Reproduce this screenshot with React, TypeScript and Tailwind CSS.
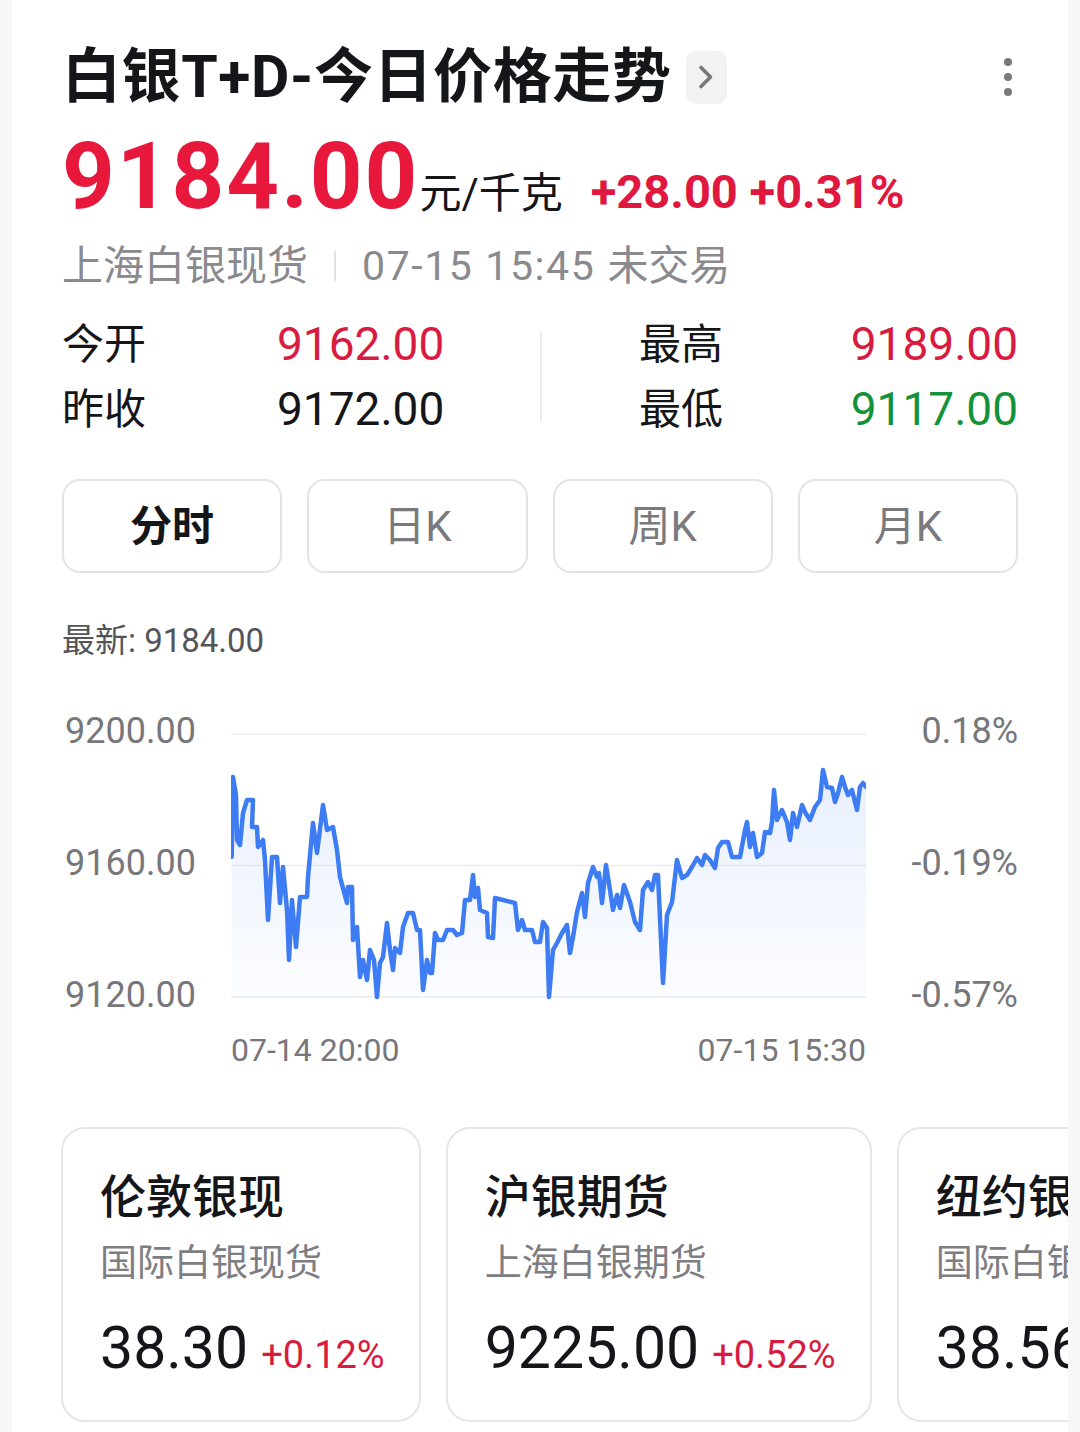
import React from "react";

const PTS: [number, number][] = [
  [231.7, 856.7], [233, 777], [236, 795], [237, 840], [240, 845], [243, 813], [247, 800], [253, 800],
  [252, 827], [257, 827], [258, 847], [263, 840], [265, 860], [268, 920], [272, 857], [277, 857],
  [280, 903], [283, 867], [287, 910], [289, 960], [292, 900], [296, 947], [300, 897], [307, 897],
  [308, 877], [313, 823], [317, 853], [323, 805], [327, 830], [333, 827], [337, 850], [340, 877],
  [347, 903], [348, 887], [352, 887], [353, 940], [357, 927], [360, 977], [363, 960], [367, 980],
  [370, 950], [374, 960], [377, 997], [380, 963], [383, 957], [387, 923], [390, 950], [393, 970],
  [395, 948], [400, 953], [403, 927], [408, 913], [413, 913], [417, 930], [420, 930], [423, 990],
  [427, 960], [430, 973], [432, 973], [435, 933], [438, 940], [443, 940], [447, 930], [453, 930],
  [457, 935], [462, 933], [465, 900], [470, 900], [473, 875], [475, 897], [478, 888], [480, 910],
  [487, 913], [488, 937], [493, 938], [495, 898], [515, 903], [518, 930], [522, 920], [525, 930],
  [532, 930], [535, 942], [540, 942], [543, 922], [547, 928], [549, 997], [553, 950], [557, 943],
  [562, 933], [567, 925], [570, 953], [573, 937], [577, 912], [582, 893], [585, 917], [588, 883],
  [593, 867], [597, 877], [599, 873], [602, 903], [606, 865], [610, 890], [613, 910], [617, 895],
  [620, 908], [624, 885], [630, 902], [635, 922], [640, 930], [643, 890], [648, 882], [652, 890],
  [655, 875], [658, 875], [663, 983], [667, 915], [672, 902], [677, 860], [682, 878], [687, 875],
  [692, 867], [697, 858], [702, 865], [705, 855], [710, 860], [715, 868], [718, 848], [722, 842],
  [728, 842], [732, 857], [740, 857], [745, 830], [747, 822], [750, 847], [753, 833], [757, 857],
  [762, 853], [765, 832], [770, 833], [772, 822], [774, 790], [777, 820], [782, 810], [787, 822],
  [790, 840], [793, 813], [797, 827], [802, 805], [805, 812], [810, 820], [815, 807], [820, 800],
  [823, 770], [827, 787], [832, 788], [835, 802], [838, 793], [842, 777], [845, 787], [848, 795],
  [852, 790], [857, 810], [860, 787], [863, 783], [866, 787],
];

function PriceChart() {
  const pts = PTS.map(([x, y]) => [x - 231, y - 711] as [number, number]);
  const line = pts.map(([x, y], i) => `${i ? "L" : "M"}${x.toFixed(1)} ${y.toFixed(1)}`).join(" ");
  const area = `${line} L${pts[pts.length - 1][0]} 286 L${pts[0][0]} 286 Z`;
  return (
    <svg width="635" height="304" viewBox="0 0 635 304" className="block shrink-0">
      <defs>
        <linearGradient id="fill" x1="0" y1="0" x2="0" y2="1">
          <stop offset="0" stopColor="#3d7cf2" stopOpacity="0.12" />
          <stop offset="1" stopColor="#3d7cf2" stopOpacity="0.02" />
        </linearGradient>
      </defs>
      {[23, 154.5, 286].map((y) => (
        <line key={y} x1="0" x2="635" y1={y} y2={y} stroke="#ececec" strokeWidth="1.5" />
      ))}
      <path d={area} fill="url(#fill)" />
      <path d={line} fill="none" stroke="#3d7cf2" strokeWidth="4.5" strokeLinejoin="round" strokeLinecap="round" />
    </svg>
  );
}

const tabs = ["分时", "日K", "周K", "月K"];

const cards = [
  { title: "伦敦银现", sub: "国际白银现货", value: "38.30", pct: "+0.12%" },
  { title: "沪银期货", sub: "上海白银期货", value: "9225.00", pct: "+0.52%" },
  { title: "纽约银期", sub: "国际白银期货", value: "38.56", pct: "+0.21%" },
];

export default function App() {
  return (
    <div className="min-h-screen bg-[#f7f7f7] font-['Roboto','Noto_Sans_CJK_SC',sans-serif] text-[#15161a]">
      <div className="mx-[12px] min-h-[1432px] overflow-hidden bg-white px-[50px]">
        {/* title */}
        <div className="mt-[39px] flex h-[76px] items-center">
          <h1 className="text-[59px] leading-[76px] font-bold tracking-[0.6px]">白银T+D-今日价格走势</h1>
          <div className="ml-[14px] flex h-[53px] w-[41px] items-center justify-center rounded-[10px] bg-[#f2f2f2]">
            <svg width="18" height="26" viewBox="0 0 18 26">
              <path d="M4 3.5 L13.5 13 L4 22.5" fill="none" stroke="#77777b" strokeWidth="3.6" strokeLinecap="round" strokeLinejoin="round" />
            </svg>
          </div>
          <div className="ml-auto mr-[6px] flex flex-col gap-[7px]">
            <span className="h-[8px] w-[8px] rounded-full bg-[#7a7a7e]" />
            <span className="h-[8px] w-[8px] rounded-full bg-[#7a7a7e]" />
            <span className="h-[8px] w-[8px] rounded-full bg-[#7a7a7e]" />
          </div>
        </div>

        {/* price */}
        <div className="mt-[16px] flex h-[92px] items-baseline">
          <span className="text-[92px] leading-none font-bold tracking-[2px] text-[#e8173c]">9184.00</span>
          <span className="text-[42px] leading-none text-[#15161a]">元/千克</span>
          <span className="ml-[28px] text-[47px] leading-none font-bold text-[#e0173e]">+28.00 +0.31%</span>
        </div>

        {/* sub line */}
        <div className="mt-[15px] flex h-[56px] items-center text-[41px] leading-[56px] text-[#8a8a8e]">
          <span>上海白银现货</span>
          <span className="mx-[26px] h-[30px] w-[2px] bg-[#e2e2e2]" />
          <span className="tracking-[1.6px]">07-15 15:45</span>
          <span className="ml-[12px]">未交易</span>
        </div>

        {/* stats */}
        <div className="mt-[18px] flex items-center">
          <div className="w-[478px]">
            <div className="flex h-[65px] items-center">
              <span className="w-[215px] text-[42px]">今开</span>
              <span className="text-[46px] text-[#d81b3f]">9162.00</span>
            </div>
            <div className="flex h-[65px] items-center">
              <span className="w-[215px] text-[42px]">昨收</span>
              <span className="text-[46px] text-[#15161a]">9172.00</span>
            </div>
          </div>
          <div className="h-[90px] w-[2px] bg-[#ebebeb]" />
          <div className="flex-1 pl-[97px]">
            <div className="flex h-[65px] items-center justify-between">
              <span className="text-[42px]">最高</span>
              <span className="text-[46px] text-[#d81b3f]">9189.00</span>
            </div>
            <div className="flex h-[65px] items-center justify-between">
              <span className="text-[42px]">最低</span>
              <span className="text-[46px] text-[#14923a]">9117.00</span>
            </div>
          </div>
        </div>

        {/* tabs */}
        <div className="mt-[37px] grid grid-cols-4 gap-[25px]">
          {tabs.map((t, i) => (
            <div
              key={t}
              className={
                i === 0
                  ? "flex h-[94px] items-center justify-center rounded-[18px] border-2 border-[#e4e4e4] text-[42px] font-bold text-[#15161a]"
                  : "flex h-[94px] items-center justify-center rounded-[18px] border-2 border-[#e4e4e4] text-[42px] text-[#7a7a7e]"
              }
            >
              {t}
            </div>
          ))}
        </div>

        {/* latest */}
        <div className="mt-[46px] text-[33px] leading-[44px] text-[#555559]">最新: 9184.00</div>

        {/* chart */}
        <div className="mt-[48px] flex h-[304px]">
          <div className="flex w-[169px] flex-col justify-between pl-[3px] text-[36px] leading-[40px] text-[#77777b]">
            <span>9200.00</span>
            <span>9160.00</span>
            <span>9120.00</span>
          </div>
          <PriceChart />
          <div className="flex flex-1 flex-col items-end justify-between text-[36px] leading-[40px] text-[#77777b]">
            <span>0.18%</span>
            <span>-0.19%</span>
            <span>-0.57%</span>
          </div>
        </div>
        <div className="mt-[15px] flex h-[40px] w-[804px] justify-between pl-[169px] text-[32px] leading-[40px] text-[#77777b]">
          <span>07-14 20:00</span>
          <span>07-15 15:30</span>
        </div>

        {/* related */}
        <div className="-mr-[50px] mt-[57px] ml-[-1px] flex gap-[25px] pb-[10px]">
          {cards.map((c) => (
            <div key={c.title} className="h-[295px] shrink-0 rounded-[24px] border-2 border-[#e6e6e6] pl-[37px] pr-[34px] pt-[38px]">
              <div className="text-[46px] leading-[60px] font-medium">{c.title}</div>
              <div className="mt-[12px] text-[37px] leading-[50px] text-[#7d7d82]">{c.sub}</div>
              <div className="mt-[29px] flex items-baseline whitespace-nowrap">
                <span className="text-[59px] leading-none">{c.value}</span>
                <span className="ml-[13px] text-[38px] leading-none text-[#d81b3f]">{c.pct}</span>
              </div>
            </div>
          ))}
        </div>
      </div>
    </div>
  );
}
